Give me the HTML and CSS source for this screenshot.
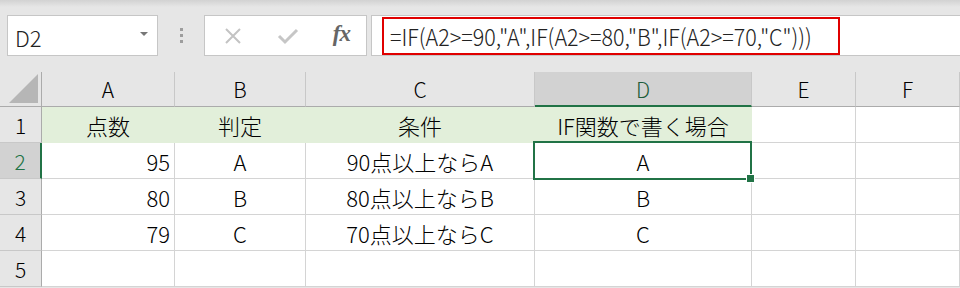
FILE: index.html
```html
<!DOCTYPE html>
<html>
    <head>
        <meta charset="utf-8">
        <link rel="stylesheet" href="styles.css">
    </head>
    <body>
        <div class="bar">
            <div class="namebox">
                <span class="ref">D2</span>
                <span class="drop"></span>
            </div>
            <div class="dots"><i></i><i></i><i></i></div>
            <div class="buttons">
                <svg class="btn" width="22" height="22" viewBox="0 0 22 22"><path d="M4 4 L18 18 M18 4 L4 18" stroke="#c3c3c3" stroke-width="2"/></svg>
                <svg class="btn" width="24" height="22" viewBox="0 0 24 22"><path d="M3 11 L9 17 L21 5" stroke="#c6c6c6" stroke-width="3" fill="none"/></svg>
                <span class="fx">fx</span>
            </div>
            <div class="formula">
                <div class="mark"><span class="text">=IF(A2&gt;=90,"A",IF(A2&gt;=80,"B",IF(A2&gt;=70,"C")))</span></div>
            </div>
        </div>
        <div class="sheet">
            <div class="corner">
                <svg width="30" height="29" viewBox="0 0 30 29"><path d="M29 0 L29 29 L0 29 Z" fill="#b6b6b6"/></svg>
            </div>
            <div class="col">A</div>
            <div class="col">B</div>
            <div class="col">C</div>
            <div class="col active">D</div>
            <div class="col">E</div>
            <div class="col">F</div>

            <div class="row">1</div>
            <div class="cell head">点数</div>
            <div class="cell head">判定</div>
            <div class="cell head">条件</div>
            <div class="cell head">IF関数で書く場合</div>
            <div class="cell"></div>
            <div class="cell"></div>

            <div class="row active">2</div>
            <div class="cell num">95</div>
            <div class="cell">A</div>
            <div class="cell">90点以上ならA</div>
            <div class="cell picked">A</div>
            <div class="cell"></div>
            <div class="cell"></div>

            <div class="row">3</div>
            <div class="cell num">80</div>
            <div class="cell">B</div>
            <div class="cell">80点以上ならB</div>
            <div class="cell">B</div>
            <div class="cell"></div>
            <div class="cell"></div>

            <div class="row">4</div>
            <div class="cell num">79</div>
            <div class="cell">C</div>
            <div class="cell">70点以上ならC</div>
            <div class="cell">C</div>
            <div class="cell"></div>
            <div class="cell"></div>

            <div class="row">5</div>
            <div class="cell"></div>
            <div class="cell"></div>
            <div class="cell"></div>
            <div class="cell"></div>
            <div class="cell"></div>
            <div class="cell"></div>
        </div>
    </body>
</html>
```

FILE: styles.css
```css
body {
    margin: 0;
    background: #e6e6e6;
    font-family: "Noto Sans CJK JP", "Noto Sans", sans-serif;
    font-weight: 300;
    color: #000;
    overflow: hidden;
}

.bar {
    display: flex;
    align-items: stretch;
    height: 72px;
    box-sizing: border-box;
    padding: 15px 0 16px 7px;
    background: linear-gradient(#d2d2d2, #e6e6e6 7px);
}

.namebox {
    width: 151px;
    box-sizing: border-box;
    background: #fff;
    border: 1px solid #c6c6c6;
    display: flex;
    align-items: center;
    justify-content: space-between;
    padding: 0 9px 0 7px;
}
.ref {
    font-size: 22px;
    color: #222;
    margin-top: 2px;
}
.drop {
    width: 0;
    height: 0;
    border-left: 4px solid transparent;
    border-right: 4px solid transparent;
    border-top: 4px solid #777;
    margin-top: -4px;
}

.dots {
    width: 46px;
    display: flex;
    flex-direction: column;
    align-items: center;
    justify-content: center;
    gap: 3px;
}
.dots i {
    width: 3px;
    height: 3px;
    background: #9d9d9d;
}

.buttons {
    width: 163px;
    box-sizing: border-box;
    background: #fff;
    border: 1px solid #c6c6c6;
    display: flex;
    align-items: center;
    padding: 0 16px 0 17px;
    justify-content: space-between;
}
.fx {
    font-family: "Liberation Serif", serif;
    font-style: italic;
    font-weight: bold;
    font-size: 23px;
    color: #666;
    margin-top: -3px;
    letter-spacing: -1px;
}

.formula {
    flex: 1;
    margin-left: 4px;
    background: #fff;
    border: 1px solid #c6c6c6;
    border-right: 0;
    padding: 1px 0 0 10px;
}
.mark {
    box-sizing: border-box;
    width: 458px;
    height: 38px;
    line-height: 35px;
    border: 2px solid #e00000;
    padding-left: 6px;
    color: #222;
    white-space: nowrap;
}
.mark .text {
    display: inline-block;
    font-size: 23px;
    transform: scaleX(0.935);
    transform-origin: left center;
}

.sheet {
    display: grid;
    grid-template-columns: 42px 133px 131px 229px 217px 104px 1fr;
    grid-template-rows: 35px repeat(5, 36px);
    background: #fff;
    font-size: 22px;
}

.corner {
    background: #e6e6e6;
    border-right: 1px solid #ababab;
    border-bottom: 1px solid #ababab;
    display: flex;
    align-items: flex-end;
    justify-content: flex-end;
    padding: 0 2px 3px 0;
}

.col, .row {
    background: #e6e6e6;
    display: flex;
    align-items: center;
    justify-content: center;
    font-size: 21px;
}
.col {
    border-right: 1px solid #c8c8c8;
    border-bottom: 1px solid #ababab;
}
.col.active {
    background: #d2d2d2;
    border-bottom: 2px solid #217346;
    color: #1d5c3a;
}
.row {
    border-right: 1px solid #ababab;
    border-bottom: 1px solid #c8c8c8;
}
.row.active {
    background: #d2d2d2;
    border-right: 2px solid #217346;
    color: #217346;
}

.cell {
    border-right: 1px solid #d4d4d4;
    border-bottom: 1px solid #d4d4d4;
    display: flex;
    align-items: center;
    justify-content: center;
    padding-top: 1px;
}
.cell.head {
    background: #e2efda;
    border-right-color: #e2efda;
    border-bottom-color: #e2efda;
}
.cell.num {
    justify-content: flex-end;
    padding-right: 4px;
}

.picked {
    position: relative;
}
.picked::after {
    content: "";
    position: absolute;
    left: -2px;
    top: -2px;
    right: -1px;
    bottom: -2px;
    border: 2px solid #217346;
}
.picked::before {
    content: "";
    position: absolute;
    right: -4px;
    bottom: -5px;
    width: 7px;
    height: 7px;
    background: #217346;
    border: 1px solid #fff;
    z-index: 1;
}
```
